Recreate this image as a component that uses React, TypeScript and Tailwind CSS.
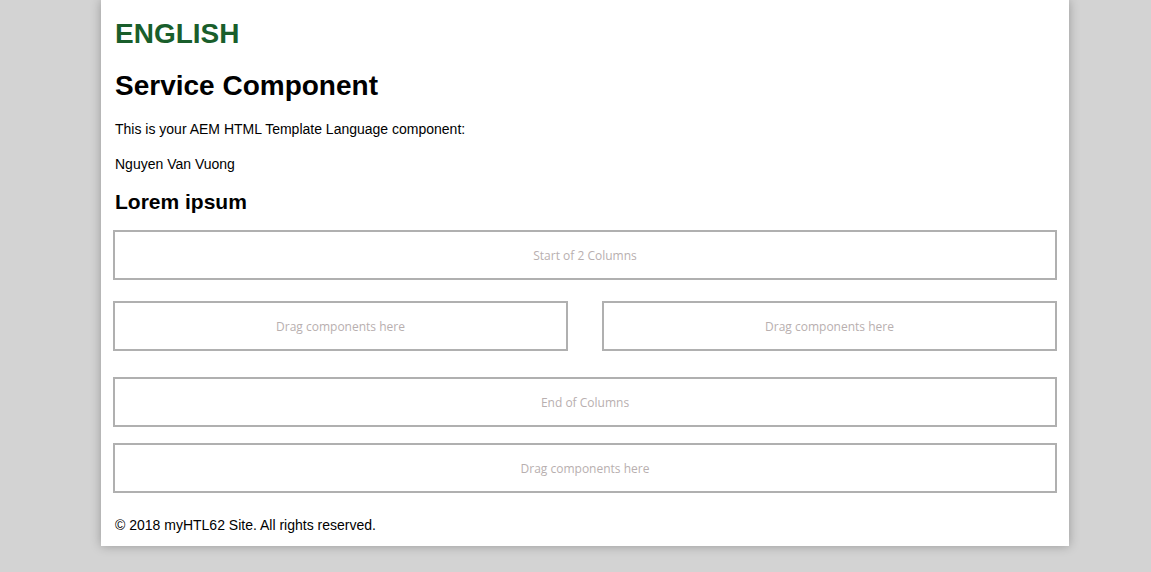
const dropZone =
  "flex h-[50px] items-center justify-center border-2 border-[#b0b0b0] bg-white pt-[2px] text-[12px] text-[#b8afaf] [font-family:'Open_Sans',sans-serif]";

function DropZone({ label }: { label: string }) {
  return <div className={dropZone}>{label}</div>;
}

export default function App() {
  return (
    <div className="min-h-[572px] bg-[#d3d3d3] [font-family:'Liberation_Sans',Arial,sans-serif]">
      <div className="ml-[101px] w-[968px] bg-white px-3 pt-[18px] pb-[13px] shadow-[0_0_10px_rgba(0,0,0,0.28)]">
        <h2 className="pl-[2px] text-[28px] leading-[32px] font-bold text-[#195e2b]">
          ENGLISH
        </h2>
        <h1 className="mt-[20px] pl-[2px] text-[28px] leading-[32px] font-bold text-black">
          Service Component
        </h1>
        <p className="mt-[19px] pl-[2px] text-[14px] leading-[16px] text-black">
          This is your AEM HTML Template Language component:
        </p>
        <p className="mt-[19px] pl-[2px] text-[14px] leading-[16px] text-black">
          Nguyen Van Vuong
        </p>
        <h2 className="mt-[18px] pl-[2px] text-[21px] leading-[24px] font-bold text-black">
          Lorem ipsum
        </h2>

        <div className="mt-[16px]">
          <DropZone label="Start of 2 Columns" />
        </div>
        <div className="mt-[21px] grid grid-cols-2 gap-[34px]">
          <DropZone label="Drag components here" />
          <DropZone label="Drag components here" />
        </div>
        <div className="mt-[26px]">
          <DropZone label="End of Columns" />
        </div>
        <div className="mt-[16px]">
          <DropZone label="Drag components here" />
        </div>

        <p className="mt-[24px] pl-[2px] text-[14px] leading-[16px] text-black">
          © 2018 myHTL62 Site. All rights reserved.
        </p>
      </div>
    </div>
  );
}
